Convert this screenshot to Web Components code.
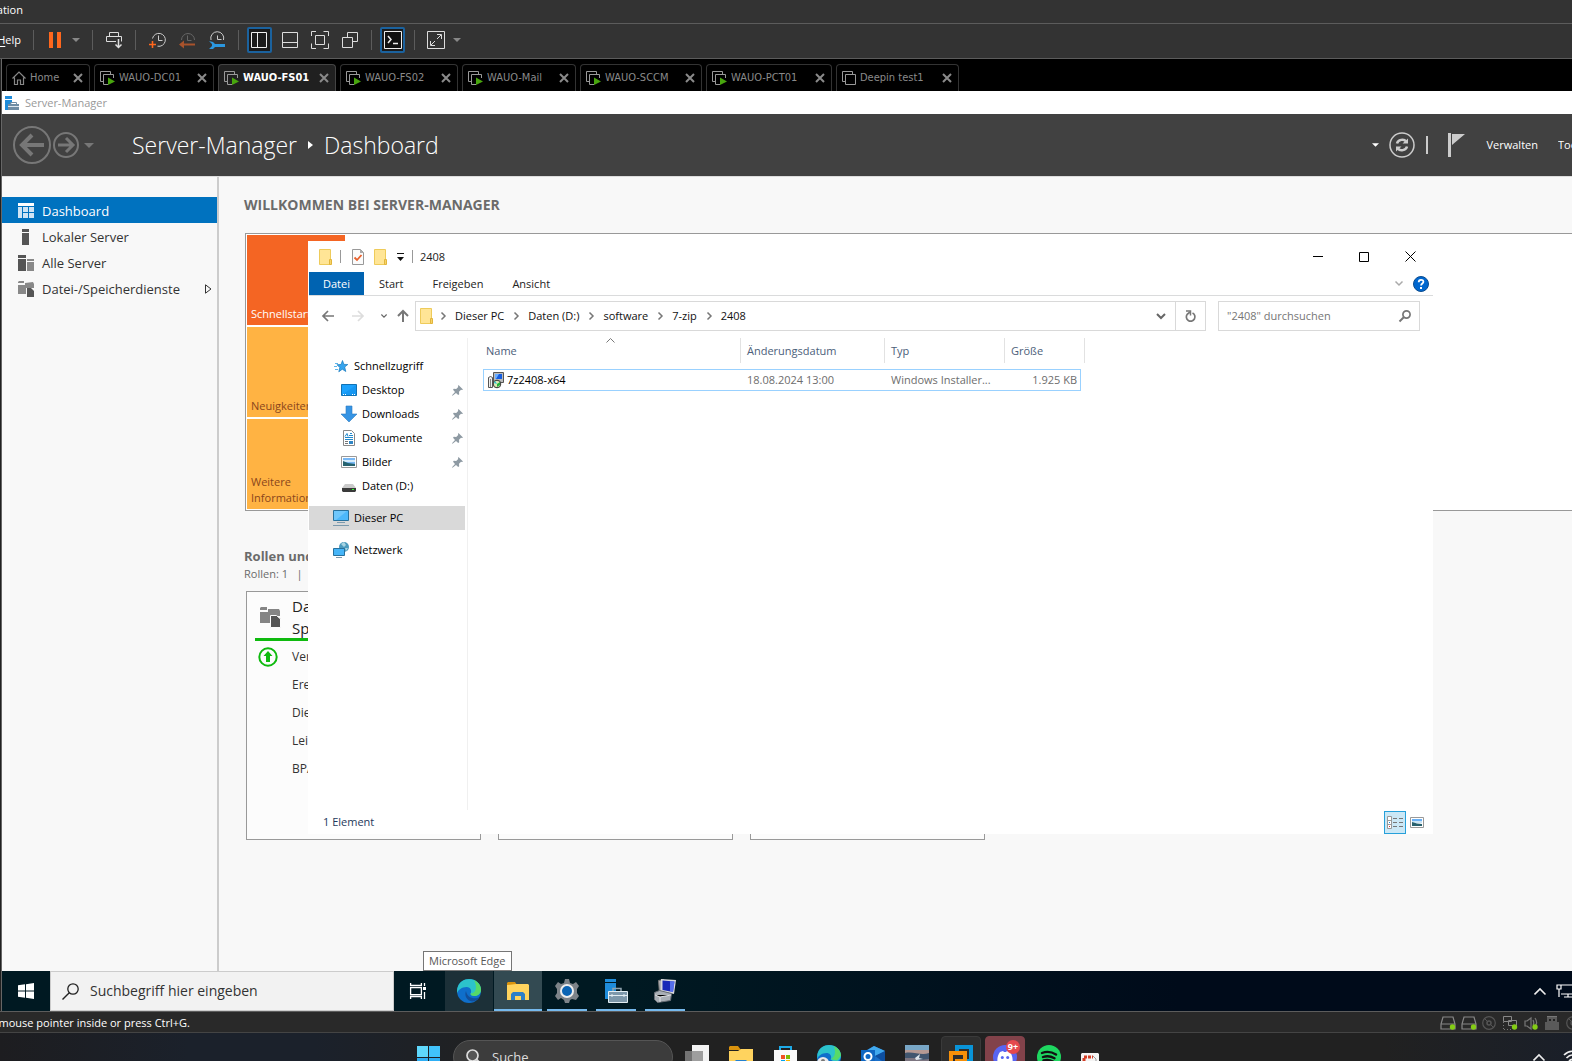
<!DOCTYPE html>
<html lang="de">
<head>
<meta charset="utf-8">
<title>WAUO-FS01 - VMware Workstation</title>
<style>
html, body {
    margin: 0;
    height: 100%;
    overflow: hidden;
    background: #202020;
    font-family: "Open Sans", "Noto Sans", sans-serif;
    font-size: 11px;
    line-height: 16px;
}
</style>
</head>
<body>
<vm-workstation></vm-workstation>
<script>
// [width, height, markup]
const ICONS = {
    pause: [14, 16, '<path fill="#ff671d" d="M1 0h4v16H1zM9 0h4v16H9z"/>'],
    caret: [8, 4, '<path fill="currentColor" d="M0 0h8L4 4z"/>'],
    send: [17, 18, '<g fill="none" stroke="#ddd"><path d="M3.500 6V1.500h9V6M10 10.500H.5v-5h15v5"/><path stroke-width="1.500" d="M12.500 8v8M9.500 13.500l3 3 3-3"/></g>'],
    clockAdd: [17, 17, '<g fill="none" stroke="#ccc"><path d="M3.500 6.500a6.500 6.500 0 1 1 5 7.700M9.500 3.500v5h4"/><path stroke="#ff671d" stroke-width="1.600" d="M0 12.500h7M3.500 9v7"/></g>'],
    clockBack: [17, 17, '<g fill="none" stroke="#666"><path d="M2.500 8a6.500 6.500 0 1 1 13 0M8.500 3.500v5h4"/></g><path fill="#a8532c" d="M0 12.500l5-4v3h11v2H5v3z"/>'],
    clockTool: [17, 17, '<g fill="none" stroke="#ccc"><path d="M2 8a6.500 6.500 0 1 1 12.500 0M8.500 3.500v4h4"/></g><path fill="#2b97df" d="M0 9l4 1 2 2h10v3H6l-2 2H0l3-3v-2z"/>'],
    layoutSide: [17, 17, '<path fill="none" stroke="#eee" d="M.5.500h15v15H.5zM6.500.500v15"/>'],
    layoutBottom: [17, 17, '<path fill="none" stroke="#ddd" d="M.5.500h15v15H.5zM.5 10.500h15"/>'],
    fullscreen: [18, 18, '<path fill="none" stroke="#ddd" d="M4.500 4.500h9v9h-9zM.5 5V.5H5M12.500.5h5V5M17.500 12.500v5h-5M5 17.500H.5v-5"/>'],
    unity: [17, 17, '<path fill="none" stroke="#ddd" d="M5.500 5V.5h10v9H11M.5 5.500h10v10H.5z"/>'],
    terminal: [18, 18, '<path fill="#111" stroke="#eee" d="M.5.5h17v17H.5z"/><path fill="none" stroke="#eee" stroke-width="1.500" d="M4 5l3 3.500L4 12M9 12.500h5"/>'],
    stretch: [18, 18, '<path fill="none" stroke="#ddd" d="M.5.5h17v17H.5zM10 3.500h4.500V8M3.500 10v4.500H8M14 4L10 8M8 10l-4 4"/>'],
    home: [14, 14, '<path fill="none" stroke="#888" stroke-width="1.200" d="M.5 7.500L7 1l6.500 6.500M2.500 6.500v7h3V9h3v4.500h3v-7"/>'],
    vmOn: [15, 14, '<path fill="none" stroke="#999" d="M3 10.500H.5V.5h10V3M8 13.500H3.500v-10h10V7"/><path fill="#48a60e" d="M8 6.500l7 4-7 3.500z"/>'],
    vmOff: [14, 14, '<path fill="none" stroke="#999" d="M3 10.500H.5V.5h10V3M3.500 3.500h10v10h-10z"/>'],
    tabClose: [10, 10, '<path fill="none" stroke="currentColor" stroke-width="2" d="M1 1l8 8M9 1L1 9"/>'],
    server: [24, 24, '<path fill="#1f8cda" d="M1 0h11v3H1zM1 4h11v16H1z"/><path fill="none" stroke="#8fa2ae" stroke-width="1.500" d="M9 12v-2.500h8V12"/><path fill="#7d97aa" stroke="#e3edf3" d="M4.500 12.500h19v11h-19z"/><path stroke="#e3edf3" d="M5 16.500h18M8 15v3M20 15v3"/>'],
    serverSmall: [14, 14, '<path fill="#1f8cda" d="M0 0h7v3H0zM0 4h7v3L3 9v5H0z"/><path fill="none" stroke="#6f8ca3" d="M5.500 8V6.500h6V8"/><path fill="#6f8ca3" d="M3 8h11v6H3z"/><path stroke="#dce6ee" d="M3 10.500h11"/>'],
    back: [38, 38, '<circle cx="19" cy="19" r="18" fill="none" stroke="#777" stroke-width="2"/><path fill="none" stroke="#777" stroke-width="4" d="M31 19H9M19 9L9 19l10 10"/>'],
    forward: [26, 26, '<circle cx="13" cy="13" r="12" fill="none" stroke="#777" stroke-width="2"/><path fill="none" stroke="#777" stroke-width="3" d="M5 13h15M13 6l7 7-7 7"/>'],
    crumb: [5, 8, '<path fill="#fff" d="M0 0l5 4-5 4z"/>'],
    refreshBig: [26, 26, '<circle cx="13" cy="13" r="12" fill="none" stroke="#ccc" stroke-width="1.500"/><path fill="none" stroke="#ccc" stroke-width="2.500" d="M8 11.500c1-4 7-5 9-2M18 14.500c-1 4-7 5-9 2"/><path fill="#ccc" d="M13.500 11.500H19V6.500zM12.500 14.500H7v5z"/>'],
    flag: [17, 24, '<path fill="#ccc" d="M0 0h3v24H0zM4 1h13L4 12z"/>'],
    dashboard: [16, 15, '<path fill="#fff" d="M0 0h16v3H0z"/><path fill="#cfe4f4" d="M0 4h4v11H0zM5 4h5v5H5zM11 4h5v5h-5zM5 10h5v5H5zM11 10h5v5h-5z"/>'],
    local: [16, 16, '<path fill="#555" d="M4 0h7v3H4zM4 4h7v12H4z"/>'],
    all: [16, 16, '<path fill="#555" d="M0 0h8v3H0zM0 4h8v12H0z"/><path fill="#888" d="M9 4h7v2H9zM9 7h7v9H9z"/>'],
    files: [16, 16, '<path fill="#888" d="M0 1l1-1h5v2H0zM0 4h7V2l8-1 1 2v4H8v6H0z"/><path fill="#555" d="M9 7h4l3 3v6H9z"/>'],
    filesBig: [20, 20, '<path fill="#858585" d="M0 1l1-1h6v3H0zM0 5h8V2h11l1 2v5H11v7H0z"/><path fill="#555" stroke="#fcfcfc" d="M10.500 8.500h6l4 3.500v8.500h-10z"/>'],
    submenu: [7, 10, '<path fill="none" stroke="#333" d="M.5.800L6 5 .5 9.200z"/>'],
    statusUp: [20, 20, '<circle cx="10" cy="10" r="8.700" fill="none" stroke="#0fba0f" stroke-width="2"/><path fill="#0fba0f" d="M10 4l4.500 5H12v6H8V9H5.500z"/>'],
    folder: [13, 16, '<path fill="#ffe596" stroke="#eecb5a" d="M.5.500h11v15H.5z"/><path fill="#f7d468" stroke="#e2b53c" d="M10.500 10.500h2v5h-2z"/>'],
    props: [12, 16, '<path fill="#fbfbfb" stroke="#999" d="M.5.500h8l3 3v12H.5z"/><path fill="#aaa" d="M8 0l4 4H8z"/><path fill="none" stroke="#e8602c" stroke-width="1.800" d="M2.500 8.500L5 11l4.500-5"/>'],
    customize: [7, 8, '<path fill="#111" d="M0 0h7v1H0zM0 4h7L3.500 8z"/>'],
    winMin: [10, 11, '<path stroke="#000" d="M0 5.500h10"/>'],
    winMax: [10, 10, '<path fill="none" stroke="#000" d="M.5.500h9v9h-9z"/>'],
    winClose: [11, 11, '<path stroke="#000" d="M.5.500l10 10M10.500.500l-10 10"/>'],
    chevDown: [8, 5, '<path fill="none" stroke="currentColor" stroke-width="1.500" d="M.5.500L4 4 7.500.500"/>'],
    chevBold: [10, 6, '<path fill="none" stroke="#666" stroke-width="2" d="M1 1l4 4 4-4"/>'],
    chevRight: [5, 8, '<path fill="none" stroke="#777" stroke-width="1.500" d="M.5.500L4 4 .5 7.500"/>'],
    help: [16, 16, '<circle cx="8" cy="8" r="7.500" fill="#0067cf" stroke="#0b4c8f"/><path fill="none" stroke="#fff" stroke-width="1.800" d="M5.700 6.200c0-3.300 4.700-3 4.700-.4 0 1.700-2.300 1.700-2.300 3.700"/><path fill="#fff" d="M7 11h2v2H7z"/>'],
    arrowLeft: [12, 12, '<path fill="none" stroke="#777" stroke-width="1.700" d="M12 6H1M6 1L1 6l5 5"/>'],
    arrowRight: [12, 12, '<path fill="none" stroke="#ddd" stroke-width="1.700" d="M0 6h11M6 1l5 5-5 5"/>'],
    arrowUp: [12, 12, '<path fill="none" stroke="#777" stroke-width="2" d="M6 12V1M1 6l5-5 5 5"/>'],
    reload: [11, 12, '<path fill="none" stroke="#777" stroke-width="1.700" d="M7.500 3a4.300 4.300 0 1 1-5.300 1.300L5 2"/><path fill="none" stroke="#777" stroke-width="1.500" d="M1 1h4.500v4.500"/>'],
    search: [12, 12, '<circle cx="7.500" cy="4.500" r="3.600" fill="none" stroke="#777" stroke-width="1.700"/><path stroke="#777" stroke-width="2" d="M5 7L.5 11.500"/>'],
    sort: [9, 5, '<path fill="none" stroke="#777" d="M.5 4.500l4-4 4 4"/>'],
    star: [14, 13, '<path fill="#35a4ee" stroke="#1678bb" stroke-width=".7" d="M8.500.5l1.400 3.900 3.900.1-3.100 2.500 1.100 4.500-3.500-2.300-3.500 2.600 1-4.300L3 4.700l4-.2z"/><path stroke="#5fb5ea" d="M1 3.500h3M0 6.500h3M1 9.500h3"/>'],
    desktop: [16, 12, '<path fill="#1ca2fd" stroke="#1172b4" d="M.5.500h15v11H.5z"/><path fill="#0b84dd" d="M1 11L15 1v10z" opacity=".35"/><path stroke="#fff" stroke-dasharray="1 1" d="M2 10.500h3M11 10.500h3"/>'],
    download: [16, 16, '<path fill="#3694e4" stroke="#2b7ac0" stroke-width=".6" d="M5 0h6v8h5l-8 8-8-8h5z"/>'],
    document: [12, 16, '<path fill="#fff" stroke="#888" d="M.5.500h8l3 3v12H.5z"/><path fill="none" stroke="#2189cc" d="M2 6.500l2-3 1 3M7 3.500h2M6 5.500h4M2 7.500h8M2 9.500h8"/><path fill="none" stroke="#777" d="M2 11.500h3M2 13.500h3"/><path fill="#2f86c5" d="M6 11h4v3H6z"/>'],
    picture: [16, 12, '<path fill="#fff" stroke="#999" d="M.5.500h15v11H.5z"/><path fill="#79b8f5" d="M2 2h12v8H2z"/><path fill="#d5ecfb" d="M2 4h12v2H2z"/><path fill="#27636f" d="M2 5l5 2 7 1v2H2z"/>'],
    drive: [14, 12, '<path fill="#cacaca" d="M3 4h8l3 4H0z"/><path fill="#3a3a3a" d="M0 8h14v3l-1 1H1l-1-1z"/><path fill="#3f3" d="M10 9h2v1h-2z"/>'],
    pc: [16, 16, '<path fill="#4cb8fb" stroke="#28719d" d="M.5.500h15v10H.5z"/><path fill="#92d6fd" d="M1 1h13L3 10H1z" opacity=".5"/><path stroke="#7c9aad" d="M4 12.500h8M0 15.500h16"/>'],
    network: [16, 16, '<circle cx="11" cy="5" r="5" fill="#4b9abd"/><path fill="#a8d4e2" d="M8 2l3-2 2 3-2 2zM12 6l3 0-2 3z"/><path fill="#46b5f8" stroke="#28719d" d="M.5 6.500h11v7H.5z"/><path stroke="#7c9aad" d="M3 15.500h6"/>'],
    pin: [11, 11, '<path fill="#8e9aa3" d="M6.500 0L11 4.500l-1 .5-1-.2-2 2 .2 2.400-1 .8L4 8 .5 10.800 0 10.300 3 7 1 4.800l.8-1 2.400.2 2-2L6 1z"/>'],
    installer: [16, 16, '<path fill="#bbb" stroke="#555" d="M5.500.500h10v10h-10z"/><path fill="#155de0" d="M7 2h7v5H7z"/><path fill="#69adff" d="M7 2h4L8 7H7z"/><path fill="#eee" stroke="#555" d="M.5 5.500l2-1 2 1v10h-4z"/><path fill="none" stroke="#888" d="M2.500 7v8"/><circle cx="9" cy="12" r="3.800" fill="#dbe6b6" stroke="#333"/><path fill="#1eb53a" d="M9 12l3-2v3l-3 2z"/><path fill="#22c2d4" d="M9 12L6 11l1-2z"/>'],
    viewDetails: [16, 13, '<path fill="#fff" stroke="#999" d="M.5.500h4v12h-4zM.5 4.500h4M.5 8.500h4"/><path stroke="#777" d="M6 2.500h4M12 2.500h4M6 6.500h4M12 6.500h4M6 10.500h4M12 10.500h4"/><path fill="#d33" d="M2 10h1v1H2z"/><path fill="#28c" d="M2 6h1v1H2z"/>'],
    viewLarge: [14, 11, '<path fill="#fff" stroke="#999" d="M.5.500h13v10H.5z"/><path fill="#69b0f5" d="M2 2h10v3H2z"/><path fill="#cbe5f5" d="M2 4h10v2H2z"/><path fill="#28616d" d="M2 5l5 1.500 5 .5v2H2z"/>'],
    win10: [16, 16, '<path fill="#fff" d="M0 2.300l7-1V7.600H0zM8 1.200L16 0v7.600H8zM0 8.500h7v6.300l-7-1zM8 8.500h8V16l-8-1.200z"/>'],
    searchThin: [17, 17, '<circle cx="11" cy="6" r="5.200" fill="none" stroke="#222" stroke-width="1.300"/><path stroke="#222" stroke-width="1.400" d="M7.300 9.700L.5 16.500"/>'],
    taskView: [17, 16, '<path fill="none" stroke="#fff" stroke-width="1.300" d="M.6 0v2.500h10.800V0M.6 16v-2.500h10.800V16M.6 4.600h10.800v7H.6zM14.500 0v3M14.500 9v7"/><path fill="#fff" d="M13 4h3v3h-3z"/>'],
    edge: [24, 24, '<circle cx="12" cy="12" r="12" fill="#0f6fcb"/><path fill="#2cc3cb" d="M.4 9C2 3 7 0 12 0c7 0 12 5 12 10.500 0 4-3 6.500-6.500 6.500-3 0-4.500-1.500-4-2.500C15 12.500 14 8 9.500 8 5 8 1 11 .2 14-.1 12 0 10.500.4 9z"/><path fill="#63e04f" d="M17 1.200c4.500 2 7 5.500 7 9.300 0 4-3 6.500-6.500 6.500-3 0-4-1.300-4-2.500 4 .5 8-5 3.500-13.300z" opacity=".8"/><path fill="#124f9a" d="M9 12c-2 5 1 9.500 6 10.500 3 0 6-2 7.500-4.500-3 2-12 2.500-13.500-6z"/>'],
    explorer: [22, 18, '<path fill="#d9920d" d="M0 1l1-1h7l2 3h-10z"/><path fill="#ffd35e" d="M0 3l9-1h12l1 1v15H0z"/><path fill="#2d7fc8" d="M4 18v-6l2-2h10l2 2v6h-4v-4H8v4z"/>'],
    gear: [24, 24, '<path fill="#7d8389" d="M10 0h4l1 4 3 1 3-2 3 4-2 3v4l2 3-3 4-4-1-2 1-1 3h-4l-1-3-3-2-3 2-3-4 2-3v-4L0 7l3-4 3 2 3-1z"/><circle cx="12" cy="12" r="6" fill="#0b64b4" stroke="#eee" stroke-width="2"/>'],
    tools: [24, 24, '<path fill="#b4b4b8" stroke="#777" d="M5.500 1.500l5-1 1 12-5 2z"/><path fill="#d9d9dc" d="M8 0l15 1-2 14-13-3z"/><path fill="#1829b8" d="M9.500 1.500l12 1L20 13l-10.500-2z"/><path fill="#718cff" d="M17 2.200l4.500.3L20 13l-3-.6z" opacity=".7"/><path fill="#a9afb6" stroke="#686e76" d="M1.500 13.500l5-2 12 3-1 7-13 2-3-3z"/><path stroke="#e3e5e8" d="M2 16l5 2 11-2M7 18v5"/>'],
    trayUp: [12, 7, '<path fill="none" stroke="#eee" stroke-width="1.600" d="M.5 6.500L6 1l5.500 5.500"/>'],
    trayNet: [20, 14, '<path fill="none" stroke="#fff" stroke-width="1.200" d="M5 1h14v9H5M1 1h4v4H1zM3 5v8M12 10v3M8 13h8"/>'],
    disk: [16, 14, '<path fill="none" stroke="#888" stroke-width="1.200" d="M3 1h10l2 7v5H1V8zM1 8h14"/><circle cx="12.500" cy="11" r="2.700" fill="#84cc16"/>'],
    disc: [14, 14, '<circle cx="7" cy="7" r="6.300" fill="none" stroke="#555" stroke-width="1.200"/><circle cx="7" cy="7" r="2" fill="none" stroke="#555" stroke-width="1.500"/><path stroke="#555" d="M3 3l2 2M9 9l2 2"/>'],
    netDev: [15, 14, '<path fill="none" stroke="#888" d="M.5.500h8v5h-8zM5.500 4.500h8v5h-8z"/><path stroke="#777" stroke-dasharray="1 2" d="M.5 6v8M1 13.500h8"/><circle cx="11.500" cy="11" r="2.700" fill="#84cc16"/>'],
    sound: [14, 14, '<path fill="none" stroke="#777" stroke-width="1.200" d="M1 5h2l4-3v11l-4-3H1zM9 4c1 2 1 4 0 5M11 2c2 3 2 6 0 8"/><circle cx="11" cy="11" r="2.700" fill="#84cc16"/>'],
    usb: [14, 14, '<path fill="#5a5a5a" d="M0 6h2V1h10v5h2v8H0z"/><path fill="#222" d="M4 3h2v2H4zM8 3h2v2H8z"/><path fill="#777" d="M2 0h10v1H2z"/>'],
    win11: [23, 23, '<path fill="#5fd8fc" d="M0 0h11v11H0z"/><path fill="#41c3fb" d="M12 0h11v11H12z"/><path fill="#2eaff5" d="M0 12h11v11H0zM12 12h11v11H12z"/>'],
    hostSearch: [16, 16, '<circle cx="6.500" cy="6.500" r="5.500" fill="#555" stroke="#ddd" stroke-width="1.700"/><path stroke="#ddd" stroke-width="2" d="M10.500 10.500l4 4"/>'],
    hostTask: [24, 24, '<path fill="#f3f3f3" d="M7 0h17v18H7z"/><path fill="#888" d="M0 6h18v18H0z" opacity=".8"/>'],
    hostFolder: [24, 22, '<path fill="#d9920d" d="M0 1l1-1h8l3 4H0z"/><path fill="#ffd35e" d="M0 5h9l3-2h12v19H0z"/><path fill="#2481cf" d="M5 22v-6l2-2h10l2 2v6z"/>'],
    store: [23, 23, '<path fill="none" stroke="#1eaae7" stroke-width="2" d="M6 5V1h11v4"/><path fill="#f8f8f8" d="M0 4h23v19H0z"/><path fill="#f15022" d="M7 9h4v4H7z"/><path fill="#7fba00" d="M12 9h4v4h-4z"/><path fill="#00a4ef" d="M7 14h4v4H7z"/><path fill="#ffb900" d="M12 14h4v4h-4z"/>'],
    edgeUser: [24, 24, '<circle cx="12" cy="12" r="12" fill="#0f6fcb"/><path fill="#2cc3cb" d="M.4 9C2 3 7 0 12 0c7 0 12 5 12 10.500 0 4-3 6.500-6.500 6.500l-4-2.500C15 12.500 14 8 9.500 8 5 8 1 11 .2 14z"/><path fill="#63e04f" d="M17 1.200c4.500 2 7 5.500 7 9.300l-4 5-6-1.500c4-2 5-7 3-12.800z" opacity=".8"/><circle cx="6" cy="18" r="6" fill="#e8e8ea"/><circle cx="6" cy="16" r="2" fill="#777"/>'],
    outlook: [24, 22, '<path fill="#1a6fc9" d="M4 5l9-5 11 5v17H4z"/><path fill="#41a9ee" d="M13 0L5 5l9 5 10-5z"/><path fill="#0e4fa0" d="M14 10l10-5v12z"/><path fill="#1067c2" d="M0 4h14v14H0z"/><circle cx="7" cy="10.500" r="3.500" fill="none" stroke="#fff" stroke-width="2"/>'],
    photo: [24, 24, '<path fill="#78a6c6" d="M0 0h24v24H0z"/><path fill="#b59a94" d="M0 5h24v5H0z"/><path fill="#41566f" d="M0 8c8-2 16 3 24 0v16H0z"/><path fill="#7c7580" d="M0 13h10l5 2 9-1v3H0z"/><path fill="#dde4ea" d="M10 13l5-4-1 4 4 1-7 1z"/>'],
    vmware: [24, 24, '<g fill="none" stroke-width="4"><path stroke="#0994d8" d="M8 6V2h14v14h-6"/><path stroke="#f79009" d="M2 22V8h14v8H8v8"/></g>'],
    discord: [24, 24, '<circle cx="12" cy="12" r="12" fill="#5865f2"/><path fill="#fff" d="M7 7l3-1 1 1h2l1-1 3 1c2 3 3 6 2.500 10L16 18l-1-2H9l-1 2-3.500-1C4 13 5 10 7 7z"/><circle cx="9.300" cy="12.500" r="1.500" fill="#5865f2"/><circle cx="14.700" cy="12.500" r="1.500" fill="#5865f2"/>'],
    spotify: [24, 24, '<circle cx="12" cy="12" r="12" fill="#1ed760"/><path fill="none" stroke="#111" stroke-width="2.400" stroke-linecap="round" d="M5 8c5-2 10-1 14 1.500M6 12c4-1.500 8-.8 11.500 1.200M6.500 15.500c3.500-1 6.500-.6 9.500 1"/>'],
    snip: [24, 24, '<path fill="#f4f4f4" d="M1 8h16l1 1v15H0V9z"/><path fill="none" stroke="#d33d25" stroke-width="3" stroke-dasharray="3 1" d="M3 24V12h9"/><path fill="none" stroke="#999" d="M12 11l3 3v10"/>'],
    wifi: [18, 14, '<path fill="none" stroke="#eee" stroke-width="1.700" d="M1 5c5-5 11-5 16 0M3.500 8c4-4 7-4 11 0M6 11c2-2 4-2 6 0"/>']
};

// common base: markup() and styles() go into an open shadow root
class UiElement extends HTMLElement {
    constructor() {
        super();
        const shadowRoot = this.attachShadow({ mode: 'open' });
        shadowRoot.innerHTML = `
        <style>
        *{ box-sizing:border-box; }
        button{
            display:flex; align-items:center; justify-content:center;
            margin:0; padding:0; border:0; background:none;
            color:inherit; font:inherit; white-space:nowrap;
        }
        input{
            flex:1; min-width:0; height:24px; padding:0; border:0; outline:0;
            background:none; color:inherit; font:inherit; line-height:24px;
        }
        input::placeholder{ color:inherit; opacity:1; }
        a{ color:inherit; text-decoration:none; }
        ${this.styles()}
        </style>
        ${this.markup()}`;
    }
    styles() { return ':host{ display:block; }'; }
    markup() { return '<slot></slot>'; }
}

class UiIcon extends UiElement {
    styles() {
        return `
        :host{ display:inline-flex; flex:none; }
        svg{ display:block; overflow:visible; }`;
    }
    markup() {
        const [w, h, body] = ICONS[this.getAttribute('name')];
        const size = Number(this.getAttribute('size')) || w;
        return `<svg width="${size}" height="${Math.round(size * h / w)}" viewBox="0 0 ${w} ${h}" aria-hidden="true">${body}</svg>`;
    }
}

class VmToolbar extends UiElement {
    styles() {
        return `
        :host{ display:block; color:#fff; background:#333; }
        .title{ display:flex; justify-content:flex-end; width:23px; height:23px; line-height:20px; overflow:hidden; }
        .line{ height:1px; background:#5c5c5c; }
        .tools{ display:flex; align-items:center; height:34px; padding-bottom:2px; }
        .menu{ width:27px; height:24px; padding-right:6px; justify-content:flex-end; overflow:hidden; }
        u{ text-underline-offset:2px; }
        .tool{ width:30px; height:26px; }
        .on{ width:25px; margin:0 3px 0 2px; border:2px solid #1b629e; border-radius:2px; background:#1b1b1b; }
        .drop{ width:16px; height:26px; padding-right:4px; color:#888; }
        .sep{ width:1px; height:20px; margin:0 6px; background:#5c5c5c; }`;
    }
    markup() {
        const tool = (name, label, on) => `<button class="tool ${on ? 'on' : ''}" aria-label="${label}"><ui-icon name="${name}"></ui-icon></button>`;
        const sep = '<span class="sep"></span>';
        const drop = '<button class="drop" aria-label="More"><ui-icon name="caret"></ui-icon></button>';
        return `
        <div class="title">ation</div>
        <div class="line"></div>
        <div class="tools">
            <button class="menu"><u>H</u>elp</button>${sep}
            ${tool('pause', 'Suspend')}${drop}${sep}
            ${tool('send', 'Send keys')}${sep}
            ${tool('clockAdd', 'Take snapshot')}${tool('clockBack', 'Revert')}${tool('clockTool', 'Manage snapshots')}${sep}
            ${tool('layoutSide', 'Library', true)}${tool('layoutBottom', 'Thumbnails')}${tool('fullscreen', 'Full screen')}${tool('unity', 'Unity')}${sep}
            ${tool('terminal', 'Console', true)}${sep}
            ${tool('stretch', 'Stretch')}${drop}
        </div>
        <div class="line"></div>`;
    }
}

class VmTab extends UiElement {
    styles() {
        return `
        :host{
            display:flex; align-items:center; height:27px;
            padding:0 6px 0 5px; border:1px solid #333; border-bottom:0;
            border-radius:4px 4px 0 0; color:#8a8a8a;
            font-family:"DejaVu Sans Condensed","Noto Sans",sans-serif;
            font-size:11px; box-sizing:border-box;
        }
        :host([active]){ color:#fff; background:#202020; border-color:#444; font-weight:bold; }
        .name{ flex:1; gap:4px; justify-content:flex-start; }
        .close{ color:#8a8a8a; }`;
    }
    markup() {
        return `
        <button class="name"><ui-icon name="${this.getAttribute('icon') || 'vmOn'}"></ui-icon><slot></slot></button>
        <button class="close" aria-label="Close"><ui-icon name="tabClose"></ui-icon></button>`;
    }
}

class VmTabs extends UiElement {
    styles() {
        return `
        :host{ display:flex; align-items:flex-end; gap:4px; height:32px; padding-left:4px; background:#000; }`;
    }
    markup() {
        const tabs = [
            ['Home', 84, 'home'], ['WAUO-DC01', 120], ['WAUO-FS01', 118], ['WAUO-FS02', 118],
            ['WAUO-Mail', 114], ['WAUO-SCCM', 122], ['WAUO-PCT01', 126], ['Deepin test1', 123, 'vmOff']
        ];
        return tabs.map(([name, width, icon = 'vmOn']) =>
            `<vm-tab icon="${icon}" style="width:${width}px" ${name === 'WAUO-FS01' ? 'active' : ''}>${name}</vm-tab>`).join('');
    }
}

class SmHeader extends UiElement {
    styles() {
        return `
        .caption{ display:flex; align-items:center; gap:6px; height:23px; padding-left:3px; background:#fff; color:#999; }
        .bar{ display:flex; align-items:center; height:62px; padding-left:11px; background:#414141; color:#fff; overflow:hidden; }
        .drop{ width:20px; color:#777; }
        h1{
            display:flex; align-items:center; gap:11px; margin:0 0 0 33px;
            font-size:23px; font-weight:300; line-height:32px; white-space:nowrap;
        }
        .right{ display:flex; align-items:center; margin-left:auto; }
        .small{ width:26px; }
        .sep{ width:2px; height:18px; margin:0 20px 0 11px; background:#ccc; }
        .manage{ margin:0 20px 0 22px; }
        .more{ width:14px; justify-content:flex-start; overflow:hidden; }`;
    }
    markup() {
        return `
        <div class="caption"><ui-icon name="serverSmall"></ui-icon>Server-Manager</div>
        <div class="bar">
            <button aria-label="Zurück"><ui-icon name="back"></ui-icon></button>
            <button aria-label="Vorwärts"><ui-icon name="forward" style="margin-left:2px"></ui-icon></button>
            <button class="drop" aria-label="Verlauf"><ui-icon name="caret" size="10"></ui-icon></button>
            <h1><span>Server-Manager</span><ui-icon name="crumb"></ui-icon><span>Dashboard</span></h1>
            <div class="right">
                <button class="small" aria-label="Aktualisierung"><ui-icon name="caret" size="7"></ui-icon></button>
                <button aria-label="Aktualisieren"><ui-icon name="refreshBig"></ui-icon></button>
                <span class="sep"></span>
                <button aria-label="Benachrichtigungen"><ui-icon name="flag"></ui-icon></button>
                <button class="manage">Verwalten</button>
                <button class="more">Tools</button>
            </div>
        </div>`;
    }
}

class SmNav extends UiElement {
    styles() {
        return `
        :host{ display:block; flex:none; width:217px; padding-top:20px; border-right:2px solid #ccc; box-sizing:border-box; font-size:13px; color:#333; }
        a{ display:flex; align-items:center; gap:8px; height:26px; padding:1px 5px 0 16px; }
        a.on{ background:#0072bf; color:#fff; }
        .text{ flex:1; }`;
    }
    markup() {
        return `
        <a class="on" href="#dashboard"><ui-icon name="dashboard"></ui-icon><span class="text">Dashboard</span></a>
        <a href="#local"><ui-icon name="local"></ui-icon><span class="text">Lokaler Server</span></a>
        <a href="#all"><ui-icon name="all"></ui-icon><span class="text">Alle Server</span></a>
        <a href="#files"><ui-icon name="files"></ui-icon><span class="text">Datei-/Speicherdienste</span><ui-icon name="submenu"></ui-icon></a>`;
    }
}

class SmDashboard extends UiElement {
    styles() {
        return `
        :host{ display:block; flex:1; min-width:0; padding:20px 0 0 25px; color:#6b6b6b; overflow:hidden; }
        h2{ margin:0; font-size:14px; line-height:16px; font-weight:bold; white-space:nowrap; }
        .welcome{ display:grid; grid-template-columns:98px; grid-auto-rows:90px; gap:2px; margin:20px 0 36px 1px; padding:1px; border:1px solid #999; border-right:0; background:#fff; }
        .welcome button{ align-items:flex-end; justify-content:flex-start; padding:0 4px 3px; background:#ffb343; color:#8a461c; text-align:left; white-space:normal; }
        .welcome button:first-child{ background:#f46523; color:#fff; }
        h2.small{ font-size:13px; line-height:18px; }
        .count{ line-height:18px; white-space:pre; }
        .cards{ display:flex; gap:17px; margin:8px 0 0 2px; }
        .card{ width:235px; height:249px; padding:3px 8px; border:1px solid #999; background:#fcfcfc; color:#333; font-size:12px; }
        header{ display:flex; align-items:center; gap:12px; height:46px; padding-left:5px; border-bottom:3px solid #0fba0f; color:#222; font-size:15px; line-height:22px; }
        ul{ margin:2px 0 0; padding:0; list-style:none; }
        li{ display:flex; align-items:center; height:28px; padding-left:37px; }
        li:first-child{ padding-left:3px; gap:14px; }`;
    }
    markup() {
        return `
        <h2>WILLKOMMEN BEI SERVER-MANAGER</h2>
        <div class="welcome">
            <button>Schnellstart</button>
            <button>Neuigkeiten</button>
            <button>Weitere Informationen</button>
        </div>
        <h2 class="small">Rollen und</h2>
        <div class="count">Rollen: 1   |</div>
        <div class="cards">
            <section class="card">
                <header><ui-icon name="filesBig"></ui-icon><span>Datei-/<br>Speicherdienste</span></header>
                <ul>
                    <li><ui-icon name="statusUp"></ui-icon>Verwaltbarkeit</li>
                    <li>Ereignisse</li>
                    <li>Dienste</li>
                    <li>Leistung</li>
                    <li>BPA-Ergebnisse</li>
                </ul>
            </section>
            <section class="card"></section>
            <section class="card"></section>
        </div>`;
    }
}

class ExNavItem extends UiElement {
    styles() {
        return `
        :host{ display:block; }
        a{ display:flex; align-items:center; height:24px; padding:0 2px 0 23px; color:#000; }
        :host([child]) a{ padding-left:31px; }
        :host([active]) a{ background:#d9d9d9; }
        .icon{ display:flex; justify-content:center; width:17px; margin-right:5px; }
        .text{ flex:1; }`;
    }
    markup() {
        return `
        <a href="#"><span class="icon"><ui-icon name="${this.getAttribute('icon')}"></ui-icon></span>
        <span class="text"><slot></slot></span>
        ${this.hasAttribute('pinned') ? '<ui-icon name="pin"></ui-icon>' : ''}</a>`;
    }
}

class ExplorerWindow extends UiElement {
    styles() {
        return `
        :host{ display:flex; flex-direction:column; padding-left:1px; background:#fff; color:#222; box-sizing:border-box; }
        .row{ display:flex; align-items:center; }
        .caption{ height:31px; padding-left:10px; }
        .bar{ width:1px; height:13px; margin:0 11px 0 8px; background:#999; }
        .quick{ gap:10px; }
        .quick + .bar{ margin-right:7px; }
        .caption .right{ display:flex; margin-left:auto; }
        .caption .right button{ width:46px; height:31px; }
        .ribbon{ height:24px; border-bottom:1px solid #dadbdc; }
        .ribbon .tab{ height:23px; padding:0 14px; margin-right:1px; }
        .ribbon .file{ background:#0063b1; color:#fff; }
        .ribbon .help{ gap:10px; margin-left:auto; padding-right:4px; color:#aaa; }
        .address{ height:42px; padding:0 13px 2px 12px; color:#666; }
        .address > button{ width:24px; height:24px; }
        .path{ flex:1; height:30px; margin-left:2px; padding-left:4px; border:1px solid #d9d9d9; color:#111; }
        .path button{ height:28px; }
        .path .crumb{ padding:0 10px 0 9px; }
        .path .drop{ width:28px; margin-left:auto; }
        .path .reload{ width:30px; border-left:1px solid #d9d9d9; }
        .find{ width:202px; height:30px; margin-left:12px; padding:0 8px; border:1px solid #d9d9d9; color:#767676; }
        .body{ display:flex; flex:1; min-height:0; }
        nav{ flex:none; width:159px; padding:16px 2px 0 0; border-right:1px solid #f0f0f0; }
        .gap{ margin-top:8px; }
        table{ width:602px; margin-left:15px; border-spacing:0; table-layout:fixed; }
        th{ position:relative; height:25px; padding:0 6px; border-right:1px solid #e2e2e2; color:#4c607a; font-weight:normal; text-align:left; }
        th:first-child{ padding-left:3px; }
        th ui-icon{ position:absolute; top:0; left:calc(50% - 6px); }
        .space td{ height:6px; padding:0; border:0; }
        td{ height:22px; padding:0 6px; border:1px solid #99d1ff; border-width:1px 0; color:#6d6d6d; white-space:nowrap; overflow:hidden; text-overflow:ellipsis; }
        .file-row td:first-child{ padding-left:4px; border-left-width:1px; color:#000; }
        .file-row td:last-child{ padding-right:3px; border-right-width:1px; text-align:right; }
        .file-name{ display:flex; align-items:center; gap:3px; }
        footer{ height:24px; padding-left:14px; color:#1e395b; }
        footer .right{ display:flex; gap:4px; margin-left:auto; padding-right:9px; }
        footer .on{ width:22px; height:23px; border:1px solid #26a0da; background:#cbe8f6; }`;
    }
    markup() {
        const crumbs = ['Dieser PC', 'Daten (D:)', 'software', '7-zip', '2408'];
        return `
        <div class="row caption">
            <ui-icon name="folder"></ui-icon><span class="bar"></span>
            <div class="row quick">
                <button aria-label="Eigenschaften"><ui-icon name="props"></ui-icon></button>
                <button aria-label="Neuer Ordner"><ui-icon name="folder"></ui-icon></button>
                <button aria-label="Anpassen"><ui-icon name="customize"></ui-icon></button>
            </div>
            <span class="bar"></span>2408
            <div class="right">
                <button aria-label="Minimieren"><ui-icon name="winMin"></ui-icon></button>
                <button aria-label="Maximieren"><ui-icon name="winMax"></ui-icon></button>
                <button aria-label="Schließen"><ui-icon name="winClose"></ui-icon></button>
            </div>
        </div>
        <div class="row ribbon">
            <button class="tab file">Datei</button>
            <button class="tab">Start</button>
            <button class="tab">Freigeben</button>
            <button class="tab">Ansicht</button>
            <div class="row help">
                <button aria-label="Menüband erweitern"><ui-icon name="chevDown"></ui-icon></button>
                <button aria-label="Hilfe"><ui-icon name="help"></ui-icon></button>
            </div>
        </div>
        <div class="row address">
            <button aria-label="Zurück" style="width:14px"><ui-icon name="arrowLeft"></ui-icon></button>
            <button aria-label="Vorwärts" style="width:46px"><ui-icon name="arrowRight"></ui-icon></button>
            <button aria-label="Letzte Orte" style="width:6px"><ui-icon name="chevDown" size="6"></ui-icon></button>
            <button aria-label="Nach oben" style="width:26px;padding-left:6px"><ui-icon name="arrowUp"></ui-icon></button>
            <div class="row path">
                <ui-icon name="folder" style="margin-right:8px"></ui-icon>
                ${crumbs.map(name => `<ui-icon name="chevRight"></ui-icon><button class="crumb">${name}</button>`).join('')}
                <button class="drop" aria-label="Verlauf"><ui-icon name="chevBold"></ui-icon></button>
                <button class="reload" aria-label="Aktualisieren"><ui-icon name="reload"></ui-icon></button>
            </div>
            <label class="row find"><input type="search" aria-label="Suchen" placeholder='"2408" durchsuchen'><ui-icon name="search"></ui-icon></label>
        </div>
        <div class="body">
            <nav>
                <ex-nav-item icon="star">Schnellzugriff</ex-nav-item>
                <ex-nav-item icon="desktop" child pinned>Desktop</ex-nav-item>
                <ex-nav-item icon="download" child pinned>Downloads</ex-nav-item>
                <ex-nav-item icon="document" child pinned>Dokumente</ex-nav-item>
                <ex-nav-item icon="picture" child pinned>Bilder</ex-nav-item>
                <ex-nav-item icon="drive" child>Daten (D:)</ex-nav-item>
                <ex-nav-item class="gap" icon="pc" active>Dieser PC</ex-nav-item>
                <ex-nav-item class="gap" icon="network">Netzwerk</ex-nav-item>
            </nav>
            <div>
                <table>
                    <colgroup><col style="width:258px"><col style="width:144px"><col style="width:120px"><col style="width:76px"><col style="width:4px"></colgroup>
                    <thead><tr><th>Name<ui-icon name="sort"></ui-icon></th><th>Änderungsdatum</th><th>Typ</th><th colspan="2">Größe</th></tr></thead>
                    <tbody>
                        <tr class="space"><td colspan="5"></td></tr>
                        <tr class="file-row">
                            <td><span class="file-name"><ui-icon name="installer"></ui-icon>7z2408-x64</span></td>
                            <td>18.08.2024 13:00</td><td>Windows Installer...</td><td>1.925 KB</td>
                        </tr>
                    </tbody>
                </table>
            </div>
        </div>
        <footer class="row">1 Element
            <div class="row right">
                <button class="on" aria-label="Details"><ui-icon name="viewDetails"></ui-icon></button>
                <button aria-label="Große Symbole"><ui-icon name="viewLarge"></ui-icon></button>
            </div>
        </footer>`;
    }
}

class GuestTaskbar extends UiElement {
    styles() {
        return `
        :host{ position:relative; display:flex; height:40px; background:linear-gradient(90deg,#001922 40%,#000b1a 75%); }
        .start{ width:48px; }
        label{ display:flex; align-items:center; gap:11px; width:344px; padding:0 11px; background:#f2f2f2; border:1px solid #ccc; color:#333; font-size:14px; }
        .view{ width:51px; padding-right:2px; }
        .apps{ display:flex; gap:1px; }
        .app{ position:relative; width:48px; height:40px; }
        .app.hover{ background:#1c3038; }
        .app.open::after{ content:""; position:absolute; right:4px; bottom:0; left:4px; height:2px; background:#76b9ed; }
        .app.on{ background:#334a52; }
        .app.on::after{ right:0; left:0; }
        .tray{ display:flex; align-items:center; gap:10px; width:38px; margin-left:auto; overflow:hidden; }
        .tip{ position:absolute; bottom:40px; left:421px; padding:0 6px 0 5px; border:1px solid #767676; background:#fff; color:#575757; line-height:18px; white-space:nowrap; }`;
    }
    markup() {
        return `
        <button class="start" aria-label="Start"><ui-icon name="win10"></ui-icon></button>
        <label><ui-icon name="searchThin"></ui-icon><input type="text" aria-label="Suche" placeholder="Suchbegriff hier eingeben"></label>
        <button class="view" aria-label="Aktive Anwendungen"><ui-icon name="taskView"></ui-icon></button>
        <div class="apps">
            <button class="app hover" aria-label="Edge"><ui-icon name="edge"></ui-icon></button>
            <button class="app open on" aria-label="Explorer"><ui-icon name="explorer"></ui-icon></button>
            <button class="app open" aria-label="Einstellungen"><ui-icon name="gear"></ui-icon></button>
            <button class="app open" aria-label="Server-Manager"><ui-icon name="server"></ui-icon></button>
            <button class="app open" aria-label="Computerverwaltung"><ui-icon name="tools"></ui-icon></button>
        </div>
        <div class="tray"><ui-icon name="trayUp"></ui-icon><ui-icon name="trayNet"></ui-icon></div>
        <div class="tip" role="tooltip">Microsoft Edge</div>`;
    }
}

class VmStatus extends UiElement {
    styles() {
        return `
        :host{ display:flex; align-items:center; justify-content:space-between; height:22px; padding-top:2px; border-top:1px solid #5c5c5c; border-bottom:1px solid #444; background:#292929; color:#fff; box-sizing:border-box; overflow:hidden; }
        .hint{ display:flex; justify-content:flex-end; width:190px; white-space:nowrap; }
        .devices{ display:flex; width:132px; overflow:hidden; }
        .devices button{ flex:none; width:21px; height:18px; justify-content:flex-start; }`;
    }
    markup() {
        const devices = ['disk', 'disk', 'disc', 'netDev', 'sound', 'usb', 'disc'];
        return `
        <div class="hint">mouse pointer inside or press Ctrl+G.</div>
        <div class="devices">${devices.map(name => `<button aria-label="${name}"><ui-icon name="${name}"></ui-icon></button>`).join('')}</div>`;
    }
}

class HostTaskbar extends UiElement {
    styles() {
        return `
        :host{ display:block; height:28px; overflow:hidden; background:linear-gradient(90deg,#1d1d20,#1b212b 12%,#1b212b 20%,#212121 32%,#212121 88%,#1a1f29); }
        .bar{ display:flex; align-items:center; height:48px; padding-left:406px; }
        .cell{ position:relative; width:44px; height:48px; flex:none; }
        .cell.box::before{ content:""; position:absolute; inset:3px 2px 5px; border-radius:4px; background:#2e2e2e; border:1px solid #3a3a3a; }
        .cell.alert::before{ background:#82424a; border-color:#82424a; }
        .cell ui-icon{ position:relative; }
        label{ display:flex; align-items:center; gap:10px; width:220px; height:34px; margin:0 2px 0 3px; padding:0 12px; border:1px solid #555; border-radius:17px; background:#3c3c3c; color:#ddd; font-size:13px; }
        .badge{ position:absolute; top:7px; right:7px; width:14px; height:14px; border-radius:7px; background:#e5484d; color:#fff; font-size:9px; line-height:14px; text-align:center; font-weight:bold; }
        .tray{ display:flex; align-items:center; gap:18px; width:39px; margin-left:auto; overflow:hidden; }`;
    }
    markup() {
        const apps = ['hostTask', 'hostFolder', 'store', 'edgeUser', 'outlook', 'photo', 'vmware', 'discord', 'spotify', 'snip'];
        const kind = { vmware: 'box', discord: 'box alert' };
        return `
        <div class="bar">
            <button class="cell" aria-label="Start"><ui-icon name="win11"></ui-icon></button>
            <label><ui-icon name="hostSearch"></ui-icon><input type="text" aria-label="Suche" placeholder="Suche"></label>
            <div style="display:flex">
                ${apps.map(name => `<button class="cell ${kind[name] || ''}" aria-label="${name}"><ui-icon name="${name}"></ui-icon>${name === 'discord' ? '<span class="badge">9+</span>' : ''}</button>`).join('')}
            </div>
            <div class="tray"><ui-icon name="trayUp"></ui-icon><ui-icon name="wifi"></ui-icon></div>
        </div>`;
    }
}

class VmWorkstation extends UiElement {
    styles() {
        return `
        :host{ display:flex; flex-direction:column; height:100vh; overflow:hidden; }
        .guest{ display:flex; flex:1; flex-direction:column; min-height:0; margin-left:1px; border-left:1px solid #666; }
        .desktop{ position:relative; display:flex; flex:1; flex-direction:column; min-height:0; background:#f8f8f8; }
        .page{ display:flex; flex:1; min-height:0; border-top:1px solid #ddd; }
        /* floats over the dashboard */
        explorer-window{ position:absolute; top:150px; right:139px; left:306px; height:593px; }`;
    }
    markup() {
        return `
        <vm-toolbar></vm-toolbar>
        <div class="guest">
            <vm-tabs></vm-tabs>
            <div class="desktop">
                <sm-header></sm-header>
                <div class="page"><sm-nav></sm-nav><sm-dashboard></sm-dashboard></div>
                <explorer-window></explorer-window>
            </div>
            <guest-taskbar></guest-taskbar>
        </div>
        <vm-status></vm-status>
        <host-taskbar></host-taskbar>`;
    }
}

customElements.define('ui-icon', UiIcon);
customElements.define('vm-toolbar', VmToolbar);
customElements.define('vm-tab', VmTab);
customElements.define('vm-tabs', VmTabs);
customElements.define('sm-header', SmHeader);
customElements.define('sm-nav', SmNav);
customElements.define('sm-dashboard', SmDashboard);
customElements.define('ex-nav-item', ExNavItem);
customElements.define('explorer-window', ExplorerWindow);
customElements.define('guest-taskbar', GuestTaskbar);
customElements.define('vm-status', VmStatus);
customElements.define('host-taskbar', HostTaskbar);
customElements.define('vm-workstation', VmWorkstation);
</script>
</body>
</html>
